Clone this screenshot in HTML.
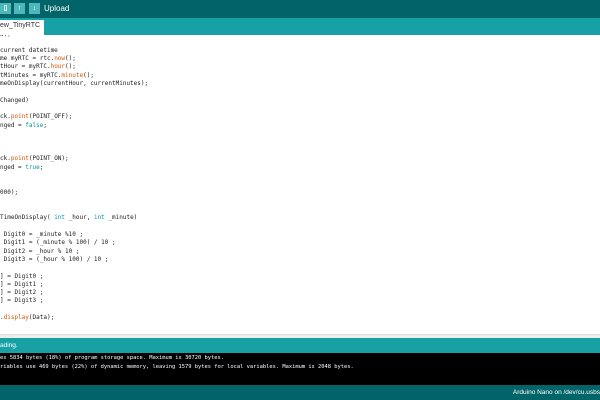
<!DOCTYPE html>
<html><head><meta charset="utf-8"><style>
*{margin:0;padding:0;box-sizing:border-box}
body{width:600px;height:400px;overflow:hidden;background:#fff;font-family:"Liberation Sans",sans-serif;position:relative}
.tb{position:absolute;left:0;top:0;width:600px;height:18px;background:#006468}
.btn{position:absolute;top:3px;width:11px;height:11px;background:#4db7bb;color:#fff;font-size:7px;text-align:center;line-height:11px;font-weight:bold}
.up{position:absolute;left:44px;top:4px;color:#fff;font-size:8px}
.tabs{position:absolute;left:0;top:18px;width:600px;height:17px;background:#17a1a5}
.tab{position:absolute;left:0;top:2px;width:44px;height:15px;background:#fff;font-size:7px;color:#333;padding:1px 0 0 0;line-height:9px;z-index:2}
.code{position:absolute;left:0;top:0;font-family:"DejaVu Sans Mono",monospace;font-size:6px;color:#222;white-space:pre}
.code div{position:absolute;left:0;white-space:pre}
.o{color:#d35400}.k{color:#00979c}
.div{position:absolute;left:0;top:334px;width:600px;height:4px;background:#eee;border-top:1px solid #ddd}
.st{position:absolute;left:0;top:338px;width:600px;height:15px;background:#17a1a5;color:#fff;font-size:6.5px;padding:4px 0 0 0}
.con{position:absolute;left:0;top:353px;width:600px;height:32px;background:#000;color:#fff;font-family:"DejaVu Sans Mono",monospace;font-size:5.4px;white-space:pre}
.con div{position:absolute;left:0}
.bot{position:absolute;left:0;top:385px;width:600px;height:15px;background:#006468;color:#fff;font-size:6.5px;text-align:right;padding:4px 0 0 0;white-space:nowrap;overflow:hidden}
</style></head><body>
<div class="tb">
<div class="btn" style="left:0">▯</div>
<div class="btn" style="left:14px">↑</div>
<div class="btn" style="left:29px">↓</div>
<div class="up">Upload</div>
</div>
<div class="code">
<div style="top:31px">w()</div>
<div style="top:47px">current datetime</div>
<div style="top:55px">me myRTC = rtc.<span class="o">now</span>();</div>
<div style="top:63px">tHour = myRTC.<span class="o">hour</span>();</div>
<div style="top:72px">tMinutes = myRTC.<span class="o">minute</span>();</div>
<div style="top:80px">meOnDisplay(currentHour, currentMinutes);</div>
<div style="top:97px">Changed)</div>
<div style="top:113px">ck.<span class="o">point</span>(POINT_OFF);</div>
<div style="top:122px">nged = <span class="k">false</span>;</div>
<div style="top:155px">ck.<span class="o">point</span>(POINT_ON);</div>
<div style="top:164px">nged = <span class="k">true</span>;</div>
<div style="top:189px">000);</div>
<div style="top:214px">TimeOnDisplay( <span class="k">int</span> _hour, <span class="k">int</span> _minute)</div>
<div style="top:231px"> Digit0 = _minute %10 ;</div>
<div style="top:239px"> Digit1 = (_minute % 100) / 10 ;</div>
<div style="top:248px"> Digit2 = _hour % 10 ;</div>
<div style="top:256px"> Digit3 = (_hour % 100) / 10 ;</div>
<div style="top:273px">] = Digit0 ;</div>
<div style="top:281px">] = Digit1 ;</div>
<div style="top:289px">] = Digit2 ;</div>
<div style="top:297px">] = Digit3 ;</div>
<div style="top:314px">.<span class="o">display</span>(Data);</div>
</div>
<div class="tabs"><div class="tab">ew_TinyRTC</div></div>
<div class="div"></div>
<div class="st">ading.</div>
<div class="con">
<div style="top:2px">es 5834 bytes (18%) of program storage space. Maximum is 30720 bytes.</div>
<div style="top:11px">riables use 469 bytes (22%) of dynamic memory, leaving 1579 bytes for local variables. Maximum is 2048 bytes.</div>
</div>
<div class="bot">Arduino Nano on /dev/cu.usbs</div>
</body></html>
